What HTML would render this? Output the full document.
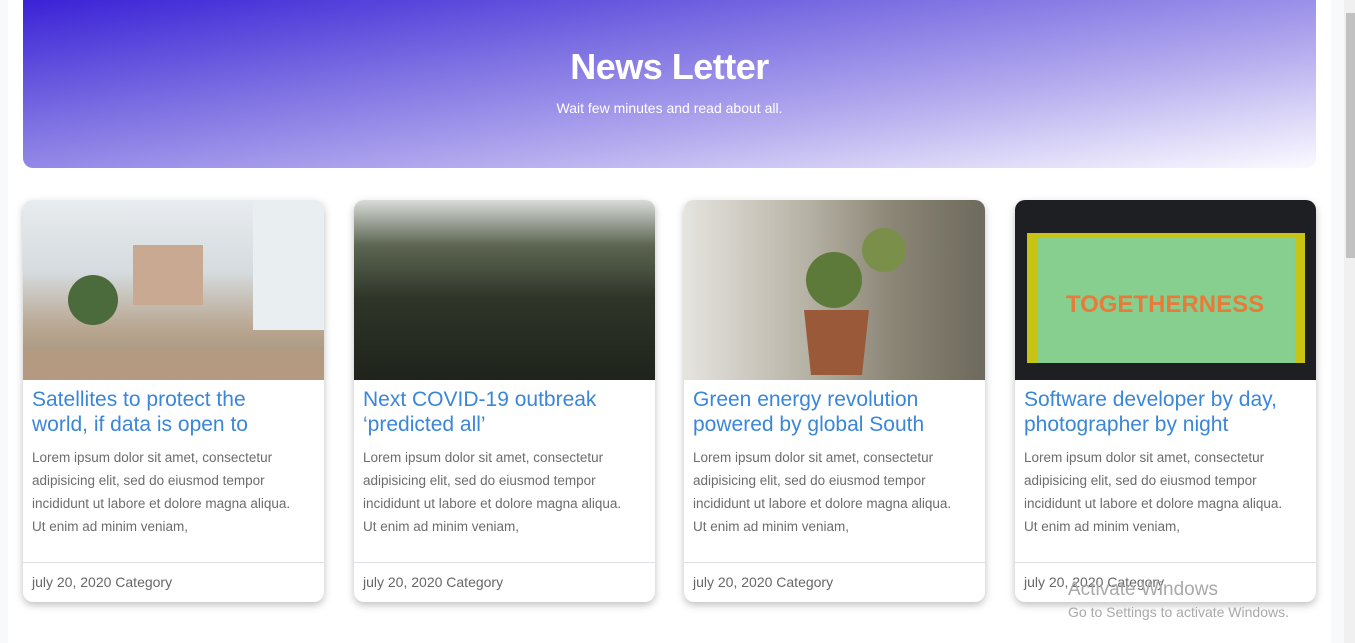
<!DOCTYPE html>
<html><head><meta charset="utf-8"><style>
*{box-sizing:border-box;margin:0;padding:0}
html,body{width:1355px;height:643px;overflow:hidden;background:#f8f9fa;font-family:"Liberation Sans",sans-serif}
.main{position:absolute;left:8px;top:0;width:1323px;height:643px;background:#fff}
.hdr{position:absolute;left:23px;top:0;width:1293px;height:168px;border-radius:0 0 10px 10px;background:linear-gradient(172deg,#3a22d6 0%,#7b6ee2 35%,#b3aaee 65%,#fbfaff 100%);color:#fff;text-align:center}
.hdr h1{font-size:36px;font-weight:bold;margin-top:46px;letter-spacing:-0.5px}
.hdr p{font-size:14px;margin-top:12px}
.card{position:absolute;top:200px;width:301px;height:402px;background:#fff;border-radius:10px;box-shadow:0 3px 8px rgba(0,0,0,.25);overflow:hidden}
.img{height:180px}
.t{color:#3a86d8;font-size:21px;line-height:25px;padding:7px 40px 0 9px}
.d{color:#6c6c6c;font-size:13.5px;line-height:23px;padding:9px 26px 0 9px}
.f{position:absolute;left:0;right:0;top:362px;border-top:1px solid #e0e0e6;color:#666;font-size:14px;padding:11px 9px}
.sb{position:absolute;left:1344px;top:0;width:11px;height:643px;background:#f0f0f0}
.th{position:absolute;left:1346px;top:13px;width:9px;height:245px;background:#c1c1c1}
.win{position:absolute;left:1068px;top:579px;color:#a9a9a9;font-size:19px}
.win2{position:absolute;left:1068px;top:604px;color:#a9a9a9;font-size:14px}
</style></head><body>
<div class="main"></div>
<div class="hdr"><h1>News Letter</h1><p>Wait few minutes and read about all.</p></div>

<div class="card" style="left:23px"><div class="img" style="background:linear-gradient(180deg,#e8ecef 0%,#d5dbde 40%,#b9a893 70%,#a08a72 100%)"><svg width="301" height="180"><rect x="110" y="45" width="70" height="60" fill="#c9a992"/><rect x="0" y="150" width="301" height="30" fill="#b59a82"/><circle cx="70" cy="100" r="25" fill="#4b6b3c"/><rect x="230" y="0" width="71" height="130" fill="#e9eef0"/></svg></div>
<div class="t">Satellites to protect the world, if data is open to</div>
<div class="d">Lorem ipsum dolor sit amet, consectetur adipisicing elit, sed do eiusmod tempor incididunt ut labore et dolore magna aliqua. Ut enim ad minim veniam,</div>
<div class="f">july 20, 2020 Category</div></div>

<div class="card" style="left:354px"><div class="img" style="background:linear-gradient(180deg,#d9dcd9 0%,#5d6652 25%,#2e3528 55%,#1f231c 100%)"></div>
<div class="t">Next COVID-19 outbreak ‘predicted all’</div>
<div class="d">Lorem ipsum dolor sit amet, consectetur adipisicing elit, sed do eiusmod tempor incididunt ut labore et dolore magna aliqua. Ut enim ad minim veniam,</div>
<div class="f">july 20, 2020 Category</div></div>

<div class="card" style="left:684px"><div class="img" style="background:linear-gradient(90deg,#e6e4df 0%,#b7b3a6 40%,#8a8575 70%,#6d695c 100%)"><svg width="301" height="180"><path d="M120 110 L185 110 L178 175 L127 175Z" fill="#9a5a3a"/><circle cx="150" cy="80" r="28" fill="#5d7a3a"/><circle cx="200" cy="50" r="22" fill="#7a8f4a"/></svg></div>
<div class="t">Green energy revolution powered by global South</div>
<div class="d">Lorem ipsum dolor sit amet, consectetur adipisicing elit, sed do eiusmod tempor incididunt ut labore et dolore magna aliqua. Ut enim ad minim veniam,</div>
<div class="f">july 20, 2020 Category</div></div>

<div class="card" style="left:1015px"><div class="img" style="background:#1e1f22"><svg width="301" height="180"><rect x="12" y="33" width="278" height="130" fill="#c9c414"/><rect x="22" y="38" width="258" height="125" fill="#86cf8f"/><text x="150" y="112" text-anchor="middle" font-family="Liberation Sans" font-weight="bold" font-size="24" fill="#e87a3a">TOGETHERNESS</text></svg></div>
<div class="t" style="padding-right:9px">Software developer by day, photographer by night</div>
<div class="d">Lorem ipsum dolor sit amet, consectetur adipisicing elit, sed do eiusmod tempor incididunt ut labore et dolore magna aliqua. Ut enim ad minim veniam,</div>
<div class="f">july 20, 2020 Category</div></div>

<div class="win">Activate Windows</div>
<div class="win2">Go to Settings to activate Windows.</div>
<div class="sb"></div><div class="th"></div>
</body></html>
